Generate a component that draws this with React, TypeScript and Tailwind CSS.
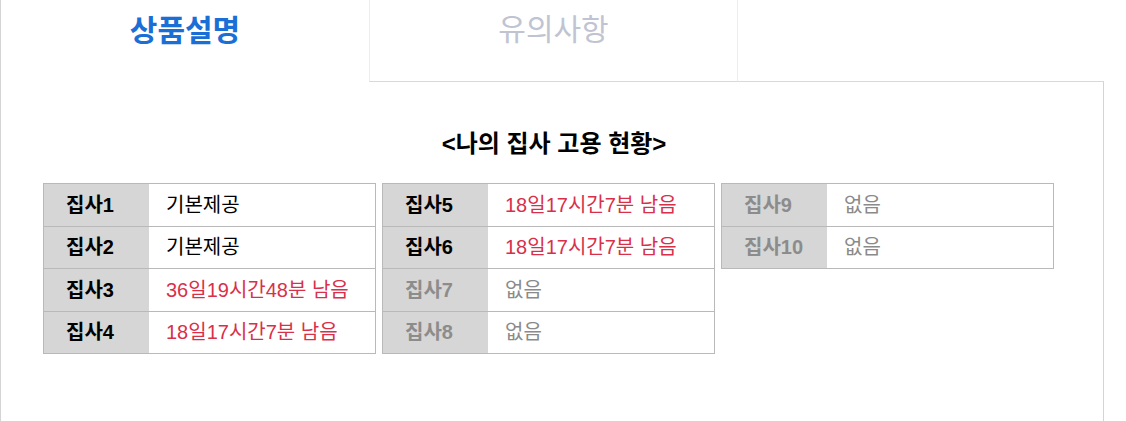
import React from 'react';

type Butler = {
    name: string;
    value: string;
    state: 'base' | 'time' | 'none';
};

const columns: Butler[][] = [
    [
        { name: '집사1', value: '기본제공', state: 'base' },
        { name: '집사2', value: '기본제공', state: 'base' },
        { name: '집사3', value: '36일19시간48분 남음', state: 'time' },
        { name: '집사4', value: '18일17시간7분 남음', state: 'time' },
    ],
    [
        { name: '집사5', value: '18일17시간7분 남음', state: 'time' },
        { name: '집사6', value: '18일17시간7분 남음', state: 'time' },
        { name: '집사7', value: '없음', state: 'none' },
        { name: '집사8', value: '없음', state: 'none' },
    ],
    [
        { name: '집사9', value: '없음', state: 'none' },
        { name: '집사10', value: '없음', state: 'none' },
    ],
];

const FONT = "font-['Liberation_Sans','Noto_Sans_CJK_KR',sans-serif]";

function ButlerTable({ rows }: { rows: Butler[] }) {
    return (
        <div className="w-[333px] border-t border-[#b9b9b9] self-start">
            {rows.map((row) => (
                <div
                    key={row.name}
                    className="flex h-[42.5px] border-x border-b border-[#b9b9b9]"
                >
                    <div
                        className={`w-[105px] flex items-center pl-[22px] bg-[#d6d6d6] font-bold text-[20px] ${
                            row.state === 'none' ? 'text-[#8c8c8c]' : 'text-black'
                        }`}
                    >
                        {row.name}
                    </div>
                    <div
                        className={`flex-1 flex items-center pl-[17px] bg-white text-[20px] ${
                            row.state === 'time'
                                ? 'text-[#d9304a]'
                                : row.state === 'none'
                                    ? 'text-[#8a8a8a]'
                                    : 'text-black'
                        }`}
                    >
                        {row.value}
                    </div>
                </div>
            ))}
        </div>
    );
}

export default function App() {
    return (
        <div className={`w-[1126px] h-[421px] bg-white overflow-hidden ${FONT}`}>
            <div className="w-[1104px] h-full border-l border-[#d4d4d4] flex flex-col">
                {/* tabs */}
                <div className="flex h-[82px] shrink-0">
                    <div className="w-[368px] flex items-center justify-center pb-[22px] text-[30px] font-bold text-[#1a6fd6]">
                        상품설명
                    </div>
                    <div className="w-[369px] flex items-center justify-center pb-[22px] border-l border-r border-[#ececec] border-b border-b-[#d9d9d9] text-[30px] text-[#c0c4d2]">
                        유의사항
                    </div>
                    <div className="flex-1 border-b border-[#d9d9d9]" />
                </div>

                {/* content */}
                <div className="flex-1 border-r border-[#d4d4d4]">
                    <h2 className="mt-[47px] text-center text-[24px] font-bold text-black leading-[30px] pl-[4px]">
                        &lt;나의 집사 고용 현황&gt;
                    </h2>
                    <div className="mt-[24px] pl-[42px] flex gap-[6px]">
                        {columns.map((rows, i) => (
                            <ButlerTable key={i} rows={rows} />
                        ))}
                    </div>
                </div>
            </div>
        </div>
    );
}
